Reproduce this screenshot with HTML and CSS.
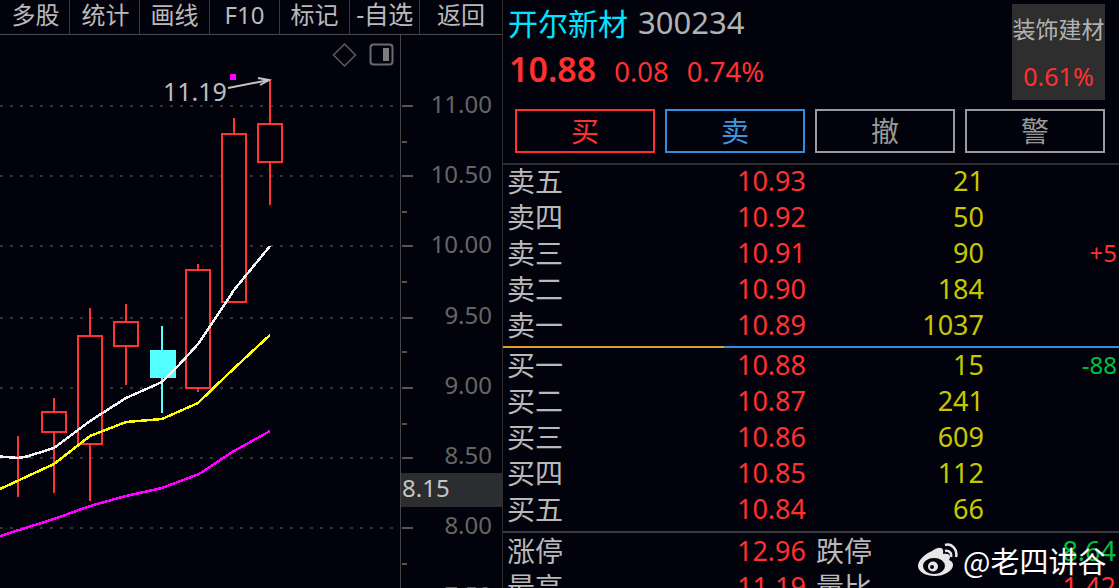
FILE: index.html
```html
<!DOCTYPE html>
<html lang="en">
<head>
    <meta charset="UTF-8">
    <title>开尔新材 300234</title>
    <link rel="stylesheet" href="styles.css">
</head>
<body>
<div class="screen">

  <div class="left">
    <div class="toolbar">
      <div class="tool">多股</div>
      <div class="tool">统计</div>
      <div class="tool">画线</div>
      <div class="tool">F10</div>
      <div class="tool">标记</div>
      <div class="tool tool-narrow">-自选</div>
      <div class="tool">返回</div>
    </div>

    <svg class="chart" width="502" height="553" viewBox="0 35 502 553">
      <!-- grid -->
      <g class="grid">
        <line x1="0" y1="106" x2="394" y2="106"/>
        <line x1="0" y1="176" x2="394" y2="176"/>
        <line x1="0" y1="246" x2="394" y2="246"/>
        <line x1="0" y1="318" x2="394" y2="318"/>
        <line x1="0" y1="388" x2="394" y2="388"/>
        <line x1="0" y1="458" x2="394" y2="458"/>
        <line x1="0" y1="528" x2="394" y2="528"/>
      </g>

      <!-- axis -->
      <line class="axis" x1="400.5" y1="35" x2="400.5" y2="588"/>
      <g class="tick">
        <line x1="402" y1="106" x2="413" y2="106"/>
        <line x1="402" y1="142" x2="407" y2="142"/>
        <line x1="402" y1="176" x2="413" y2="176"/>
        <line x1="402" y1="212" x2="407" y2="212"/>
        <line x1="402" y1="246" x2="413" y2="246"/>
        <line x1="402" y1="282" x2="407" y2="282"/>
        <line x1="402" y1="318" x2="413" y2="318"/>
        <line x1="402" y1="352" x2="407" y2="352"/>
        <line x1="402" y1="388" x2="413" y2="388"/>
        <line x1="402" y1="424" x2="407" y2="424"/>
        <line x1="402" y1="458" x2="413" y2="458"/>
        <line x1="402" y1="528" x2="413" y2="528"/>
        <line x1="402" y1="564" x2="407" y2="564"/>
      </g>
      <g class="axis-text">
        <text x="492" y="113">11.00</text>
        <text x="492" y="183">10.50</text>
        <text x="492" y="253">10.00</text>
        <text x="492" y="324">9.50</text>
        <text x="492" y="394">9.00</text>
        <text x="492" y="464">8.50</text>
        <text x="492" y="534">8.00</text>
        <text x="492" y="604">7.50</text>
      </g>
      <rect class="cross-box" x="401" y="473" width="101" height="34"/>
      <text class="cross-text" x="402" y="497">8.15</text>

      <!-- candles -->
      <g class="up">
        <line x1="18" y1="436" x2="18" y2="497"/>
        <rect x="6" y="456" width="24" height="2"/>
        <line x1="54" y1="398" x2="54" y2="493"/>
        <rect class="body" x="42" y="412" width="24" height="20"/>
        <line x1="90" y1="308" x2="90" y2="501"/>
        <rect class="body" x="78" y="336" width="24" height="108"/>
        <line x1="126" y1="304" x2="126" y2="385"/>
        <rect class="body" x="114" y="322" width="24" height="24"/>
        <line x1="198" y1="264" x2="198" y2="392"/>
        <rect class="body" x="186" y="270" width="24" height="118"/>
        <line x1="234" y1="118" x2="234" y2="302"/>
        <rect class="body" x="222" y="134" width="24" height="168"/>
        <line x1="270" y1="80" x2="270" y2="205"/>
        <rect class="body" x="258" y="124" width="24" height="38"/>
      </g>
      <line class="down-wick" x1="162" y1="326" x2="162" y2="413"/>
      <rect class="down" x="150" y="350" width="26" height="28"/>

      <!-- moving averages -->
      <polyline class="ma ma-white" points="0,456.5 18,458 27,456.5 54,448 78,430 90,421 126,398 162,382 178,366 199,343 234,290 270,246"/>
      <polyline class="ma ma-yellow" points="0,489 54,464 90,436 126,422 162,419 198,403 226,376 243,360 270,335"/>
      <polyline class="ma ma-pink" points="0,536 54,519 90,506 126,496 162,488 199,474 234,451 270,431"/>

      <!-- high marker -->
      <rect class="marker" x="230" y="74" width="6" height="6"/>
      <text class="high-text" x="163" y="101">11.19</text>
      <g class="arrow">
        <line x1="228" y1="88" x2="269" y2="80"/>
        <polyline points="258,78 269,80 260,85"/>
      </g>

      <!-- corner icons -->
      <path class="icon-line" d="M344.5 44 L355.5 55 L344.5 66 L333.5 55 Z"/>
      <rect class="icon-box" x="370.5" y="44.5" width="22" height="20" rx="3"/>
      <rect class="icon-fill" x="383" y="48" width="6" height="13"/>
    </svg>
  </div>

  <div class="right">
    <div class="head">
      <div class="head-info">
        <div class="name-line"><span class="name">开尔新材</span><span class="code">300234</span></div>
        <div class="price-line"><span class="last">10.88</span><span class="chg">0.08</span><span class="chg">0.74%</span></div>
      </div>
      <div class="sector">
        <div class="sector-name">装饰建材</div>
        <div class="sector-pct">0.61%</div>
      </div>
    </div>

    <div class="buttons">
      <div class="btn btn-buy">买</div>
      <div class="btn btn-sell">卖</div>
      <div class="btn">撤</div>
      <div class="btn">警</div>
    </div>

    <div class="book book-ask">
      <div class="row"><span>卖五</span><span class="p">10.93</span><span class="v">21</span><span class="x"></span></div>
      <div class="row"><span>卖四</span><span class="p">10.92</span><span class="v">50</span><span class="x"></span></div>
      <div class="row"><span>卖三</span><span class="p">10.91</span><span class="v">90</span><span class="x x-up">+5</span></div>
      <div class="row"><span>卖二</span><span class="p">10.90</span><span class="v">184</span><span class="x"></span></div>
      <div class="row"><span>卖一</span><span class="p">10.89</span><span class="v">1037</span><span class="x"></span></div>
    </div>

    <div class="ratio"><div class="ratio-buy"></div><div class="ratio-sell"></div></div>

    <div class="book book-bid">
      <div class="row"><span>买一</span><span class="p">10.88</span><span class="v">15</span><span class="x x-down">-88</span></div>
      <div class="row"><span>买二</span><span class="p">10.87</span><span class="v">241</span><span class="x"></span></div>
      <div class="row"><span>买三</span><span class="p">10.86</span><span class="v">609</span><span class="x"></span></div>
      <div class="row"><span>买四</span><span class="p">10.85</span><span class="v">112</span><span class="x"></span></div>
      <div class="row"><span>买五</span><span class="p">10.84</span><span class="v">66</span><span class="x"></span></div>
    </div>

    <div class="stats">
      <div class="row row-stat"><span>涨停</span><span class="p">12.96</span><span class="lab2">跌停</span><span class="g">8.64</span></div>
      <div class="row row-stat"><span>最高</span><span class="p">11.19</span><span class="lab2">量比</span><span class="r">1.42</span></div>
    </div>
  </div>

  <!-- watermark -->
  <div class="mark">
    <svg class="mark-logo" width="42" height="36" viewBox="0 0 42 36">
      <path class="logo-body" d="M16 9 C22 5 26 5 27 8 C27.5 10 27 11 27 12 C31 11 34 12 34 15 C34 16 33.5 17 33 18 C36 19 37 21 37 23 C37 29 28 34 19 34 C10 34 2 30 2 24 C2 18 9 12 16 9 Z"/>
      <ellipse class="logo-eye" cx="18" cy="24" rx="11" ry="8"/>
      <circle class="logo-body" cx="17" cy="24.5" r="5"/>
      <circle class="logo-eye" cx="16" cy="25" r="2"/>
      <path class="logo-wave" d="M29 9 C33 8 36 11 35 15"/>
      <path class="logo-wave" d="M29 3 C36 1 42 8 40 15"/>
    </svg>
    <span>@老四讲谷</span>
  </div>

</div>
</body>
</html>
```

FILE: styles.css
```css
* { box-sizing: border-box; }

html, body {
    margin: 0;
    height: 100%;
    overflow: hidden;
    background-color: #02020c;
}

.screen {
    position: relative;
    display: flex;
    width: 1119px;
    height: 588px;
    overflow: hidden;
    font-family: "Noto Sans", "Noto Sans CJK SC", sans-serif;
    color: #b9b9b9;
}

/* left side */
.left {
    width: 502px;
    flex: none;
}

.toolbar {
    display: flex;
    height: 35px;
    border-bottom: 1px solid #4a4a4a;
}

.tool {
    width: 70px;
    height: 34px;
    line-height: 29px;
    text-align: center;
    font-size: 24px;
    border-right: 1px solid #3a3a3a;
}
.tool:first-child { padding-left: 2px; }
.tool:nth-child(2) { padding-left: 2px; }
.tool:last-child { border-right: 0; width: 82px; }
.tool-narrow { font-size: 25px; letter-spacing: -0.5px; }

.chart { display: block; }

.grid line {
    stroke: #333;
    stroke-width: 2;
    stroke-dasharray: 3 7;
}

.axis { stroke: #454545; stroke-width: 1; }
.tick line { stroke: #555; stroke-width: 2; }

.axis-text text {
    fill: #656565;
    font-size: 24px;
    text-anchor: end;
}

.cross-box { fill: #2c2d30; }
.cross-text { fill: #c4c4c4; font-size: 24px; }

.up line { stroke: #ff3333; stroke-width: 2; }
.up rect { fill: #ff3333; }
.up rect.body {
    fill: #02020c;
    stroke: #ff3333;
    stroke-width: 2;
}

.down { fill: #55ffff; }
.down-wick { stroke: #55ffff; stroke-width: 2; }

.ma {
    fill: none;
    stroke-width: 2.5;
    stroke-linejoin: round;
    shape-rendering: crispEdges;
}
.ma-white { stroke: #f2f2f2; }
.ma-yellow { stroke: #ffff00; }
.ma-pink { stroke: #ff00ff; }

.marker { fill: #ff00ff; }
.high-text { fill: #b9bec2; font-size: 25px; }

.arrow line, .arrow polyline {
    fill: none;
    stroke: #c4c4c4;
    stroke-width: 2;
}

.icon-line { fill: none; stroke: #5c5c5c; stroke-width: 1.5; }
.icon-box { fill: none; stroke: #6a6a6a; stroke-width: 2; }
.icon-fill { fill: #7c7c7c; }

/* right side */
.right {
    width: 617px;
    flex: none;
    border-left: 1px solid #2e2e2e;
}

.head {
    display: flex;
    justify-content: space-between;
    height: 109px;
    padding: 4px 14px 0 5px;
}

.name-line {
    display: flex;
    align-items: center;
    gap: 10px;
    height: 36px;
}
.name { color: #00e5ff; font-size: 30px; }
.code { color: #b2b2b2; font-size: 31px; }

.price-line {
    display: flex;
    align-items: baseline;
    gap: 18px;
    padding: 6px 0 0 1px;
    color: #ff3030;
    font-size: 27.5px;
}
.last { font-size: 34px; font-weight: 600; }

.sector {
    width: 93px;
    height: 96px;
    background-color: #2e2e2e;
    text-align: center;
}
.sector-name { color: #b2b2b2; font-size: 23px; line-height: 50px; white-space: nowrap; }
.sector-pct { color: #ff3030; font-size: 25px; line-height: 44px; }

.buttons {
    display: flex;
    gap: 10px;
    padding-left: 12px;
}

.btn {
    width: 140px;
    height: 44px;
    border: 2px solid #999;
    text-align: center;
    font-size: 28px;
    line-height: 41px;
    color: #999;
}
.btn-buy { border-color: #ff3030; color: #ff3030; }
.btn-sell { border-color: #2f8fdc; color: #3f96dc; }

.book-ask {
    margin-top: 10px;
    border-top: 2px solid #2e2e2e;
}

.row {
    display: grid;
    grid-template-columns: 100px 199px 178px 133px;
    height: 36px;
    padding-left: 4px;
    font-size: 27px;
    line-height: 32px;
    white-space: nowrap;
}
.row > span:first-child, .lab2 { font-size: 28px; }

.p { color: #ff3030; text-align: right; }
.v { color: #c8c800; text-align: right; }
.x { text-align: right; font-size: 24px; }
.x-up { color: #ff3030; }
.x-down { color: #00c040; }

.ratio {
    display: flex;
    height: 2px;
    margin: 1px 0;
}
.ratio-buy { width: 221px; background-color: #e0a030; }
.ratio-sell { flex: 1; background-color: #2f8fdc; }

.stats {
    margin-top: 2px;
    padding-top: 2px;
    border-top: 2px solid #3a3a3a;
}

.row-stat {
    grid-template-columns: 100px 199px 60px 250px;
}
.lab2 { padding-left: 10px; }
.g { color: #00c040; text-align: right; }
.r { color: #ff3030; text-align: right; }

/* watermark */
.mark {
    position: absolute;
    left: 916px;
    top: 542px;
    display: flex;
    align-items: center;
    gap: 5px;
    color: #fff;
    font-size: 29px;
    font-family: "Noto Sans CJK SC", sans-serif;
    line-height: 36px;
    white-space: nowrap;
}
.mark-logo { flex: none; }
.logo-body { fill: #e8e8e8; }
.logo-eye { fill: #02020c; }
.logo-wave { fill: none; stroke: #e8e8e8; stroke-width: 2.5; }
```
